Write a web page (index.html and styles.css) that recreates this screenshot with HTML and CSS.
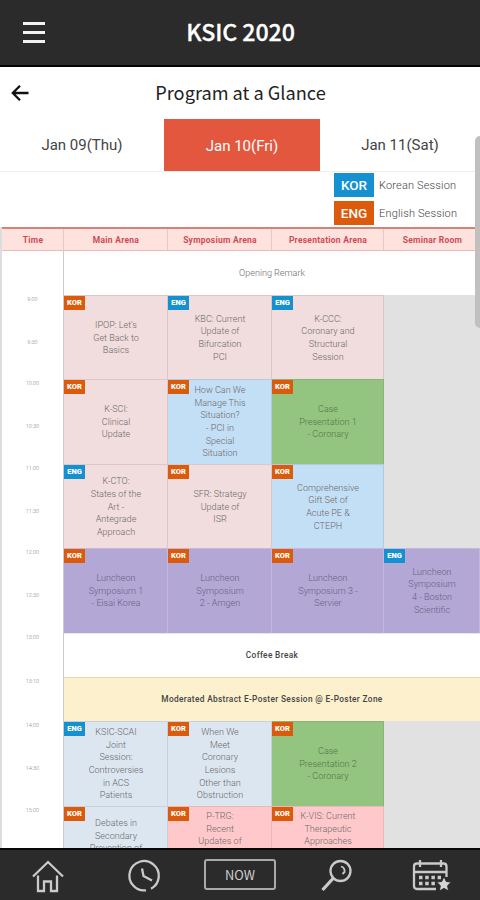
FILE: index.html
```html
<!DOCTYPE html>
<html lang="en">
<head>
<meta charset="utf-8">
<title>KSIC 2020</title>
<link rel="stylesheet" href="styles.css">
</head>
<body>
<div class="app">
  <header class="topbar">
    <div class="menu"><i></i><i></i><i></i></div>
    <h1>KSIC 2020</h1>
  </header>
  <div class="titlebar">
    <svg class="back" width="20" height="18" viewBox="0 0 20 18"><path d="M10 1.700 2.800 9l7.200 7.300M3.200 9H18.500"/></svg>
    <h2>Program at a Glance</h2>
  </div>
  <nav class="tabs">
    <span>Jan 09(Thu)</span><span class="active">Jan 10(Fri)</span><span>Jan 11(Sat)</span>
  </nav>
  <div class="legend">
    <div><b class="blue">KOR</b><span>Korean Session</span></div>
    <div><b class="orange">ENG</b><span>English Session</span></div>
  </div>
  <main class="schedule">
    <div class="row head"><div>Time</div><div>Main Arena</div><div>Symposium Arena</div><div>Presentation Arena</div><div>Seminar Room</div></div>
    <div class="row short"><div class="time"></div><div class="cell wide opening">Opening Remark</div></div>
    <div class="row">
      <div class="time"><span>9:00</span><span>9:30</span></div>
      <div class="cell pink"><b class="tag orange">KOR</b><p>IPOP: Let's<br>Get Back to<br>Basics</p></div>
      <div class="cell pink"><b class="tag blue">ENG</b><p>KBC: Current<br>Update of<br>Bifurcation<br>PCI</p></div>
      <div class="cell pink"><b class="tag blue">ENG</b><p>K-CCC:<br>Coronary and<br>Structural<br>Session</p></div>
      <div class="cell gray"></div>
    </div>
    <div class="row tall">
      <div class="time"><span>10:00</span><span>10:30</span></div>
      <div class="cell pink"><b class="tag orange">KOR</b><p>K-SCI:<br>Clinical<br>Update</p></div>
      <div class="cell sky"><b class="tag orange">KOR</b><p>How Can We<br>Manage This<br>Situation?<br>- PCI in<br>Special<br>Situation</p></div>
      <div class="cell green"><b class="tag orange">KOR</b><p>Case<br>Presentation 1<br>- Coronary</p></div>
      <div class="cell gray"></div>
    </div>
    <div class="row">
      <div class="time"><span>11:00</span><span>11:30</span></div>
      <div class="cell pink"><b class="tag blue">ENG</b><p>K-CTO:<br>States of the<br>Art -<br>Antegrade<br>Approach</p></div>
      <div class="cell pink"><b class="tag orange">KOR</b><p>SFR: Strategy<br>Update of<br>ISR</p></div>
      <div class="cell sky"><b class="tag orange">KOR</b><p>Comprehensive<br>Gift Set of<br>Acute PE &amp;<br>CTEPH</p></div>
      <div class="cell gray"></div>
    </div>
    <div class="row tall">
      <div class="time"><span>12:00</span><span>12:30</span></div>
      <div class="cell purple"><b class="tag orange">KOR</b><p>Luncheon<br>Symposium 1<br>- Eisai Korea</p></div>
      <div class="cell purple"><b class="tag orange">KOR</b><p>Luncheon<br>Symposium<br>2 - Amgen</p></div>
      <div class="cell purple"><b class="tag orange">KOR</b><p>Luncheon<br>Symposium 3 -<br>Servier</p></div>
      <div class="cell purple"><b class="tag blue">ENG</b><p>Luncheon<br>Symposium<br>4 - Boston<br>Scientific</p></div>
    </div>
    <div class="row short"><div class="time"><span>13:00</span></div><div class="cell wide">Coffee Break</div></div>
    <div class="row short"><div class="time"><span>13:10</span></div><div class="cell wide cream">Moderated Abstract E-Poster Session @ E-Poster Zone</div></div>
    <div class="row tall">
      <div class="time"><span>14:00</span><span>14:30</span></div>
      <div class="cell pale"><b class="tag blue">ENG</b><p>KSIC-SCAI<br>Joint<br>Session:<br>Controversies<br>in ACS<br>Patients</p></div>
      <div class="cell pale"><b class="tag orange">KOR</b><p>When We<br>Meet<br>Coronary<br>Lesions<br>Other than<br>Obstruction</p></div>
      <div class="cell green"><b class="tag orange">KOR</b><p>Case<br>Presentation 2<br>- Coronary</p></div>
      <div class="cell gray"></div>
    </div>
    <div class="row cut">
      <div class="time"><span>15:00</span></div>
      <div class="cell pale later"><b class="tag orange">KOR</b><p>Debates in<br>Secondary<br>Prevention of</p></div>
      <div class="cell rose"><b class="tag orange">KOR</b><p>P-TRG:<br>Recent<br>Updates of</p></div>
      <div class="cell rose"><b class="tag orange">KOR</b><p>K-VIS: Current<br>Therapeutic<br>Approaches</p></div>
      <div class="cell gray"></div>
    </div>
  </main>
  <footer class="bottom">
    <svg width="34" height="34" viewBox="0 0 34 34"><path d="M2 18.500 17 4l15 14.500M7 17.500V33h6V23.500h7V33h6V17.500"/></svg>
    <svg width="34" height="34" viewBox="0 0 34 34"><path d="M19 32.300A14.700 14.700 0 1 1 24 30.700M15 10.500 16.500 18l8.500 4.500"/></svg>
    <span class="now">NOW</span>
    <svg width="34" height="34" viewBox="0 0 34 34"><circle cx="21.500" cy="13" r="10"/><path d="M14 20.500 3.500 32" stroke-width="3.300"/><path d="M22 8.500q4 1 3.500 5.500l-2 2" stroke-width="1.800"/></svg>
    <svg class="cal" width="40" height="34" viewBox="0 0 40 34"><path d="M24 31H5q-3 0-3-3V8.500q0-3 3-3h26.500q3 0 3 3V19M2 14h32.500M8 2v7M29 2v7"/><path d="M7 19.500h22M7 25.500h17" stroke-width="3.500" stroke-dasharray="3.500 2.700"/><path class="star" d="m32 18.500 2.300 5 5 .6-3.700 3.600 1 5.300-4.600-2.600-4.700 2.600 1-5.300-3.700-3.600 5.100-.6z"/></svg>
  </footer>
  <div class="scrollbar"></div>
</div>
</body>
</html>
```
FILE: styles.css
```css
* { box-sizing: border-box; }
body { margin: 0; font-family: Roboto, "Liberation Sans", sans-serif; background: #fff; }
h1, h2, p { margin: 0; }
.app { width: 480px; height: 900px; position: relative; overflow: hidden; display: flex; flex-direction: column; }
.topbar { height: 67px; flex: none; background: #2b2b2b; border-bottom: 2px solid #050505; display: grid; grid-template-columns: 68px 1fr 67px; align-items: center; }
.menu { display: flex; flex-direction: column; gap: 6px; padding-left: 23px; }
.menu i { width: 22px; height: 3px; background: #f2f2f2; }
h1 { font: 500 23.200px/30px "Noto Sans CJK KR", sans-serif; color: #fff; text-align: center; padding: 0 10px 3px; letter-spacing: -.1px; -webkit-text-stroke: .3px #fff; }
.titlebar { height: 51px; flex: none; display: grid; grid-template-columns: 40px 1fr 40px; align-items: center; }
.back { margin-left: 10px; fill: none; stroke: #111; stroke-width: 2.3; }
h2 { font: 400 18.200px/26px "Noto Sans CJK KR", sans-serif; color: #222; text-align: center; white-space: nowrap; padding: 0 0 1px 1px; }
.tabs { height: 54px; flex: none; display: grid; grid-template-columns: 164px 156px 160px; border-bottom: 1px solid #eee; font-size: 15px; color: #444; }
.tabs span { display: flex; align-items: center; justify-content: center; padding-top: 1px; }
.tabs .active { background: #e4573f; color: #fff; margin-top: 1px; }
.blue { background: #1590d1; }
.orange { background: #dc5a0b; }
.legend { height: 55px; flex: none; padding: 1px 0 0 334px; display: flex; flex-direction: column; gap: 4px; }
.legend div { display: flex; align-items: center; gap: 5px; height: 24px; }
.legend b { width: 40px; height: 24px; color: #fff; font-size: 13.500px; font-weight: 500; line-height: 25px; text-align: center; }
.legend span { font-size: 11px; font-weight: 300; color: #444; white-space: nowrap; letter-spacing: .16px; padding-top: 1px; }
.schedule { height: 621px; flex: none; overflow: hidden; border-left: 2px solid #ddd; }
.row { display: grid; grid-template-columns: 62px 104px 104px 112px 96px; height: 84px; }
.row.tall { height: 85px; }
.row.short { height: 44px; }
.row.cut { height: 42px; }
.row.head { height: 24px; background: #fee2de; border-top: 2px solid #d4827c; border-bottom: 1px solid #e8bcb8; color: #d04a54; font-size: 8.500px; font-weight: 700; letter-spacing: .25px; }
.head div { display: flex; align-items: center; justify-content: center; border-right: 1px solid #ecc6c3; padding-left: 1px; }
.head div:last-child { border-right: 0; }
.time { display: flex; flex-direction: column; font-size: 5.500px; font-weight: 300; color: #888; text-align: center; border-right: 1px solid #ccc; }
.time span { height: 42.500px; line-height: 9px; flex: none; }
.cell { position: relative; display: flex; align-items: center; justify-content: center; text-align: center; font-size: 9.050px; line-height: 12.700px; font-weight: 300; color: #6c6969; border-top: 1px solid rgba(80, 60, 60, .13); border-right: 1px solid rgba(80, 60, 60, .13); }
.cell p { white-space: nowrap; padding-left: 1px; }
.wide { grid-column: 2 / 6; font-size: 8.300px; font-weight: 500; color: #444; border-right: 0; letter-spacing: .35px; }
.opening { font-size: 9.050px; font-weight: 300; color: #6c6969; border-top: 0; letter-spacing: 0; }
.tag { position: absolute; left: 0; top: 0; width: 21px; height: 14px; color: #fff; font-size: 7.500px; line-height: 14px; font-weight: 900; }
.pink { background: #f1dddd; }
.sky { background: #c3dff6; }
.green { background: #93c580; color: #55734a; }
.purple { background: #b2a7d5; color: #6c6185; border-color: rgba(225, 205, 230, .45); }
.cream { background: #fdf0cd; }
.pale { background: #dbe6f1; }
.rose { background: #ffc9cb; }
.gray { background: #e2e1e1; border: 0; }
.cut .cell { align-items: flex-start; padding-top: 3px; }
.cut .later { padding-top: 10px; }
.bottom { height: 53px; flex: none; background: #2b2b2b; border-top: 2px solid #080808; display: grid; grid-template-columns: repeat(5, 96px); align-items: center; justify-items: center; padding-bottom: 2px; }
.bottom svg { fill: none; stroke: #cacaca; stroke-width: 2.3; overflow: visible; }
.bottom .star { fill: #d5d5d5; stroke: #2b2b2b; stroke-width: 1; }
.now { width: 72px; height: 31px; border: 2px solid #aaa; border-radius: 3px; color: #d0d0d0; font: 400 12.800px/27px "Noto Sans CJK KR", sans-serif; text-align: center; }
.scrollbar { position: absolute; right: 0; top: 136px; width: 5px; height: 192px; border-radius: 5px 0 0 5px; background: #c2c0bf; }
```
